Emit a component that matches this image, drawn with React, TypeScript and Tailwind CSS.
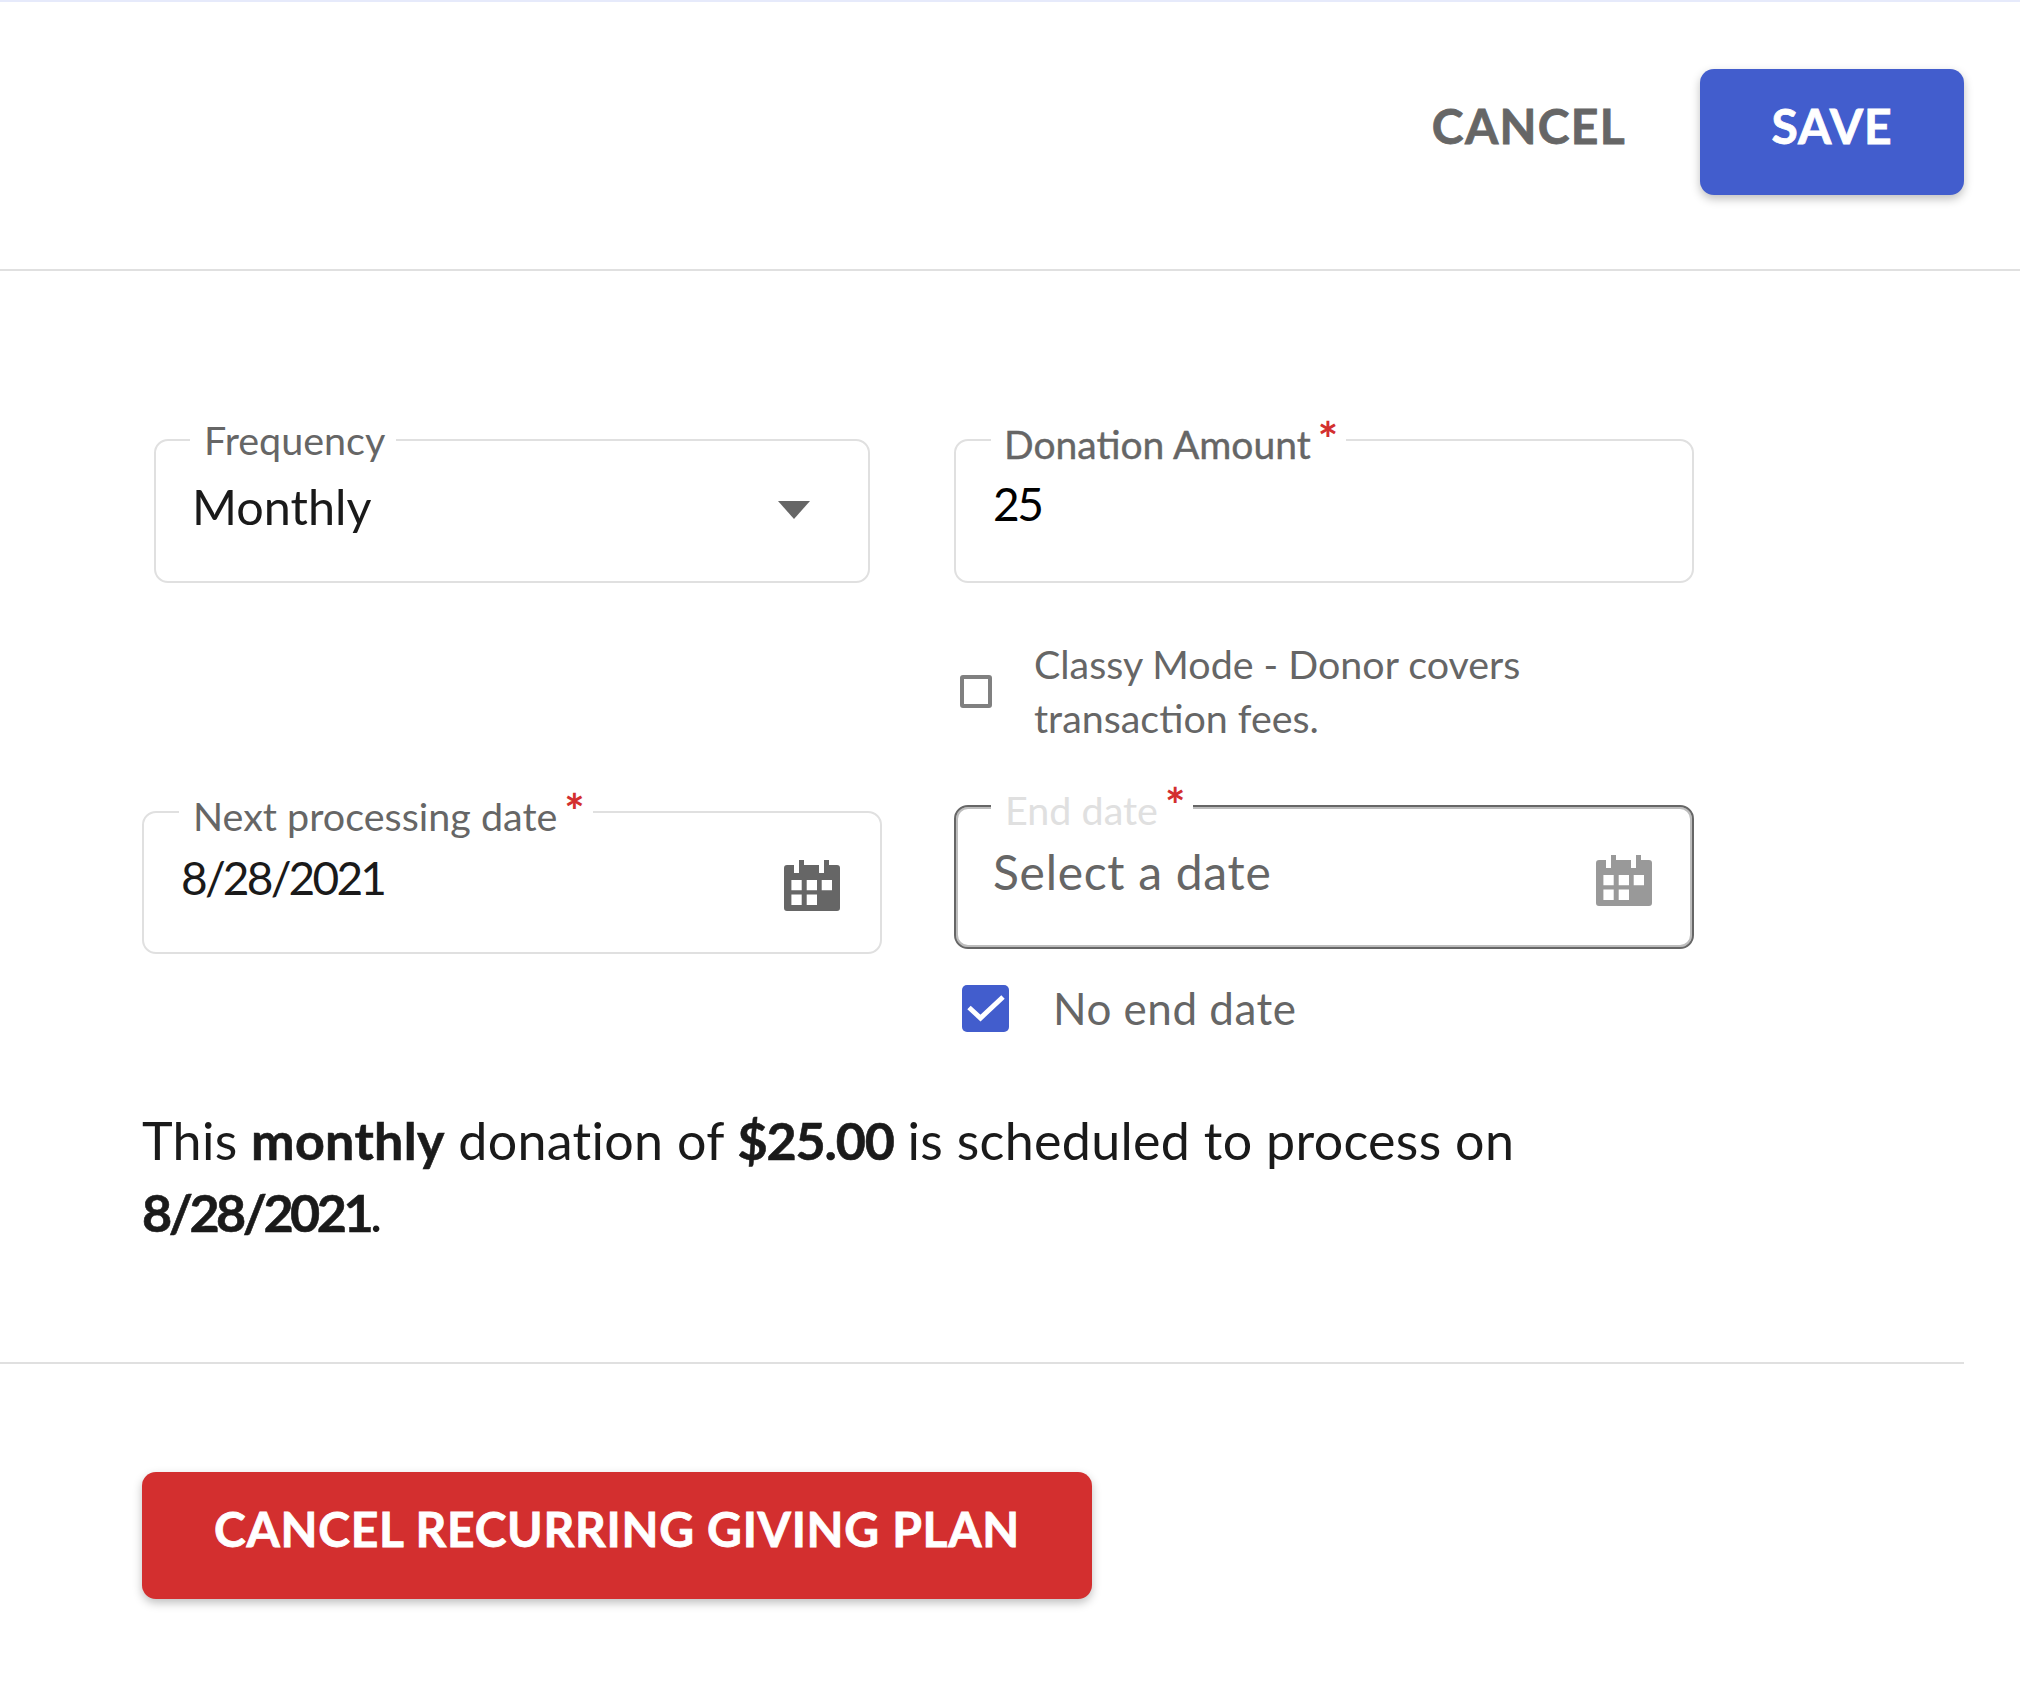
import React from "react";

const font = "font-['Lato','Liberation_Sans',sans-serif]";

function CalendarIcon({ className }: { className: string }) {
  return (
    <svg viewBox="0 0 56 52" className={className} fill="currentColor" aria-hidden="true">
      <path
        fillRule="evenodd"
        d="M3 5H10V13H15V0H20V5H35V13H40V0H45V5H53a3 3 0 0 1 3 3V48a3 3 0 0 1-3 3H3a3 3 0 0 1-3-3V8a3 3 0 0 1 3-3ZM7.4 20V30.3H17.7V20ZM22.7 20V30.3H33V20ZM37.7 20V30.3H48V20ZM7.4 34.6V45H17.7V34.6ZM22.7 34.6V45H33V34.6Z"
      />
    </svg>
  );
}

function Asterisk() {
  return <span className="text-[#d32f2f] text-[48px] leading-none font-bold relative -top-[10px] ml-[7px] h-[30px]">*</span>;
}

function RequiredLabel({ children, tone, medium = false }: { children: React.ReactNode; tone: string; medium?: boolean }) {
  return (
    <div className="absolute left-[35px] -top-[26px] h-[50px] bg-white pl-[14px] pr-[8px] flex items-center whitespace-nowrap">
      <span className={`leading-none relative top-[4px] ${tone} ${medium ? "text-[39px] -ml-[1px] [-webkit-text-stroke:0.4px_#666666]" : "text-[39.5px]"}`}>{children}</span>
      <Asterisk />
    </div>
  );
}

export default function App() {
  return (
    <div className={`${font} w-[2020px] h-[1688px] bg-white border-t-2 border-[#e6eafb] overflow-hidden`}>
      <header className="h-[269px] border-b-2 border-[#e0e0e0] box-border flex justify-end items-start pt-[67px] pr-[56px] gap-[74px]">
        <button className="h-[126px] flex items-start pt-[29px] text-[48px] leading-[56px] tracking-[1.3px] font-bold text-[#666666] [-webkit-text-stroke:0.8px_#666666]">CANCEL</button>
        <button className="w-[264px] h-[126px] rounded-[14px] bg-[#425dcd] text-white text-[48px] leading-[56px] tracking-[1px] font-bold flex items-start justify-center pt-[29px] shadow-[0_4px_10px_rgba(0,0,0,0.25)] [-webkit-text-stroke:0.8px_#ffffff]">SAVE</button>
      </header>

      <main className="flex gap-[72px] pl-[142px] pt-[168px]">
        <div className="w-[740px]">
          <div className="relative ml-[12px] w-[716px] h-[144px] rounded-[14px] border-2 border-[#e0e0e0] flex items-start justify-between pl-[36px] pr-[58px] pt-[36px]">
            <div className="absolute left-[34px] -top-[26px] h-[50px] bg-white pl-[14px] pr-[11px] flex items-center whitespace-nowrap">
              <span className="text-[39.5px] leading-none text-[#666666]">Frequency</span>
            </div>
            <span className="text-[48.5px] leading-[58px] text-[#1a1a1a]">Monthly</span>
            <span className="mt-[24px] w-0 h-0 border-x-[16px] border-x-transparent border-t-[18px] border-t-[#666666]" />
          </div>
          <div className="relative mt-[228px] w-[740px] h-[143px] rounded-[14px] border-2 border-[#e0e0e0] flex items-start justify-between pl-[37px] pr-[40px] pt-[37px]">
            <RequiredLabel tone="text-[#666666]">Next processing date</RequiredLabel>
            <span className="text-[46px] leading-[56px] tracking-[-2.8px] text-[#1a1a1a]">8/28/2021</span>
            <CalendarIcon className="w-[56px] h-[52px] mt-[10px] text-[#666666]" />
          </div>
        </div>

        <div className="w-[740px]">
          <div className="relative h-[144px] rounded-[14px] border-2 border-[#e0e0e0] pl-[37px] pt-[35px]">
            <RequiredLabel tone="text-[#666666]" medium>Donation Amount</RequiredLabel>
            <span className="block text-[46px] leading-[56px] tracking-[-2.5px] text-black">25</span>
          </div>
          <div className="flex items-center h-[108px] mt-[54px] pl-[6px]">
            <span className="w-[32px] h-[33px] rounded-[3px] border-[4px] border-[#808080] shrink-0" />
            <p className="ml-[42px] w-[520px] text-[39.4px] leading-[54px] text-[#666666]">Classy Mode - Donor covers transaction fees.</p>
          </div>
          <div className="relative mt-[60px] h-[144px] rounded-[14px] border-[2px] border-[#666666] shadow-[inset_0_0_0_2px_#bdbdbd] flex items-start justify-between pl-[37px] pr-[40px] pt-[36px]">
            <RequiredLabel tone="text-[#e0e0e0]">End date</RequiredLabel>
            <span className="text-[48px] leading-[58px] tracking-[0.7px] text-[#666666]">Select a date</span>
            <CalendarIcon className="w-[56px] h-[52px] mt-[12px] text-[#999999]" />
          </div>
          <div className="flex items-center mt-[31px] pl-[8px]">
            <span className="w-[47px] h-[47px] rounded-[5px] bg-[#425dcd] shrink-0">
              <svg viewBox="0 0 47 47" className="w-[47px] h-[47px]" fill="none" stroke="#ffffff" strokeWidth="5">
                <path d="M7 22.5 18.5 33 41 12" />
              </svg>
            </span>
            <span className="ml-[44px] text-[44px] leading-[56px] tracking-[0.5px] text-[#666666]">No end date</span>
          </div>
        </div>
      </main>

      <p className="ml-[142px] mt-[68px] w-[1500px] text-[52px] leading-[72px] tracking-[0.3px] text-[#1a1a1a]">
        This <strong className="font-bold [-webkit-text-stroke:0.6px_#1a1a1a]">monthly</strong> donation of <strong className="font-bold tracking-[-1.1px] [-webkit-text-stroke:0.6px_#1a1a1a]">$25.00</strong> is scheduled to process on <strong className="font-bold tracking-[-3.5px] [-webkit-text-stroke:0.6px_#1a1a1a]">8/28/2021</strong>.
      </p>

      <div className="mt-[114px] w-[1964px] h-[2px] bg-[#e0e0e0]" />

      <button className="ml-[142px] mt-[108px] w-[950px] h-[127px] rounded-[14px] bg-[#d32f2f] text-white text-[48px] leading-[56px] tracking-[0.7px] font-bold flex items-start justify-center pt-[29px] shadow-[0_4px_10px_rgba(0,0,0,0.25)] [-webkit-text-stroke:0.8px_#ffffff]">
        CANCEL RECURRING GIVING PLAN
      </button>
    </div>
  );
}
